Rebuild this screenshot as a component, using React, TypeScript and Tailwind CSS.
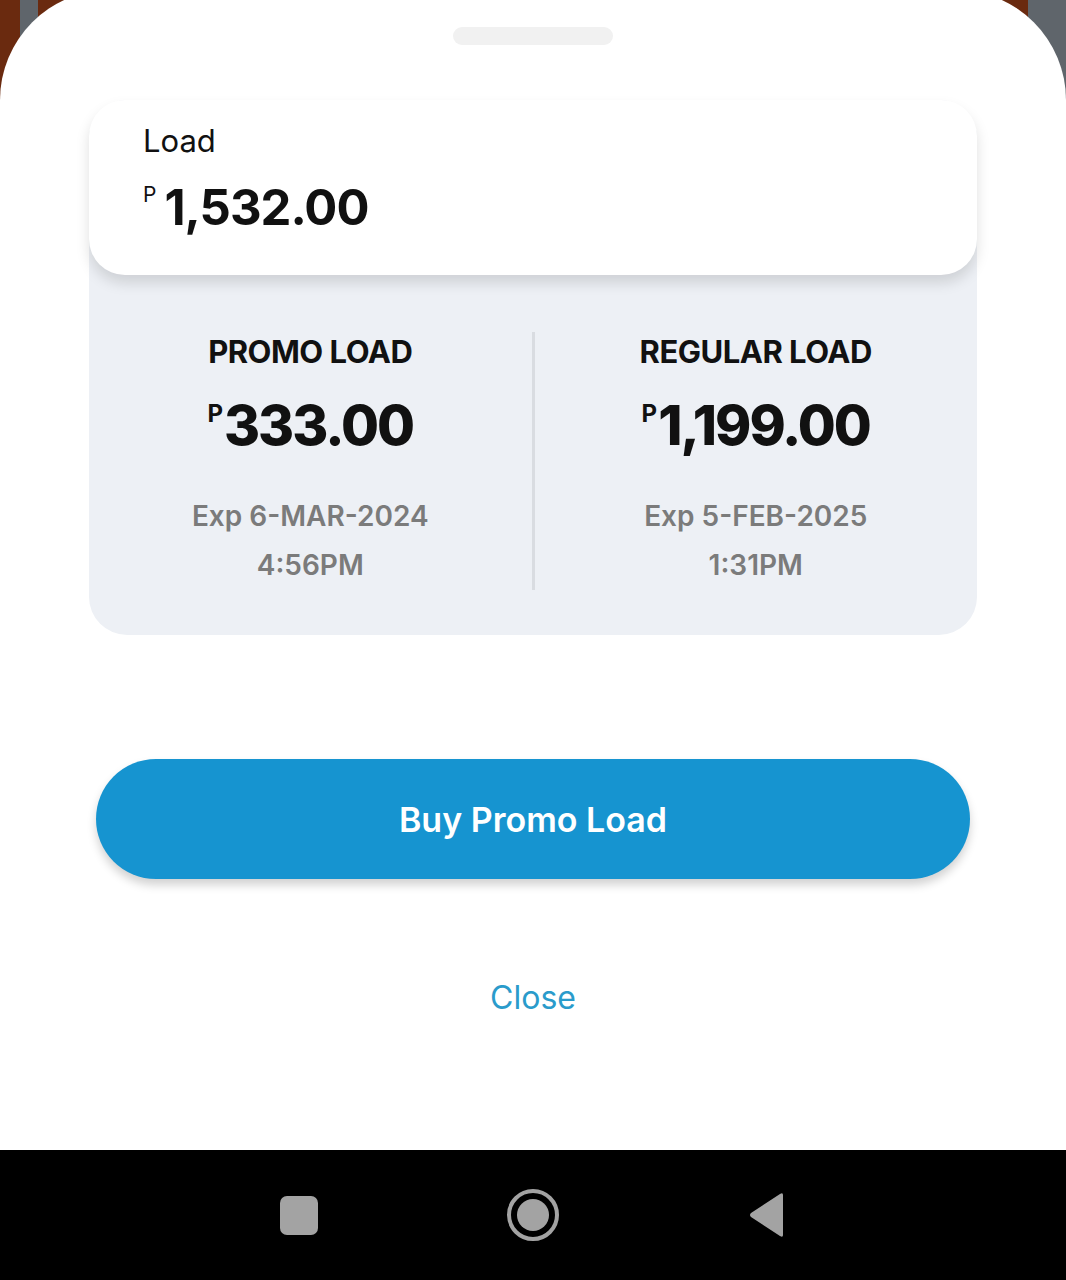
const font = "font-['Inter','Noto_Sans',sans-serif]";

function Column({ title, amount, exp, time }: { title: string; amount: string; exp: string; time: string }) {
  return (
    <div className="flex-1 flex flex-col items-center text-center">
      <div className="text-[31px] leading-[40px] font-bold text-[#111] tracking-[-0.5px]">{title}</div>
      <div className="mt-[26px] flex items-start leading-none">
        <span className="text-[24px] font-bold text-[#111] mt-[4px] mr-[1px]">P</span>
        <span className="text-[55px] font-extrabold text-[#111] tracking-[-2px]">{amount}</span>
      </div>
      <div className="mt-[39px] text-[28px] leading-[49px] font-semibold text-[#7b7b7b]">
        <div>{exp}</div>
        <div>{time}</div>
      </div>
    </div>
  );
}

export default function App() {
  return (
    <div className={`relative w-[1066px] h-[1280px] overflow-hidden bg-[#6a2a0f] ${font}`}>
      {/* background behind the sheet */}
      <div className="absolute left-[20px] top-0 w-[18px] h-[120px] bg-[#5f656b]" />
      <div className="absolute right-0 top-0 w-[38px] h-[140px] bg-[#5f656b]" />

      <div className="relative flex flex-col h-full">
        {/* bottom sheet */}
        <div className="-mt-[10px] h-[1160px] bg-white rounded-t-[110px] flex flex-col items-center">
          <div className="mt-[37px] w-[160px] h-[18px] rounded-full bg-[#f1f1f1]" />

          <div className="mt-[55px] w-[888px] rounded-[38px] bg-[#edf0f5]">
            <div className="h-[175px] rounded-[36px] bg-white shadow-[0_8px_14px_rgba(0,0,0,0.13)] pl-[54px] pt-[20px]">
              <div className="text-[31px] leading-[42px] text-[#111]">Load</div>
              <div className="mt-[21px] flex items-start leading-none">
                <span className="text-[21px] text-[#111] mt-[1px] mr-[8px]">P</span>
                <span className="text-[49px] font-bold text-[#111] tracking-[-1px]">1,532.00</span>
              </div>
            </div>
            <div className="flex pt-[57px] pb-[45px]">
              <Column title="PROMO LOAD" amount="333.00" exp="Exp 6-MAR-2024" time="4:56PM" />
              <div className="w-[3px] bg-[#d9dce1] self-stretch" />
              <Column title="REGULAR LOAD" amount="1,199.00" exp="Exp 5-FEB-2025" time="1:31PM" />
            </div>
          </div>

          <button className="mt-[124px] w-[874px] h-[120px] rounded-full bg-[#1694d0] shadow-[0_6px_10px_rgba(0,0,0,0.18)] text-white text-[34px] font-semibold">
            Buy Promo Load
          </button>

          <button className="mt-[95px] text-[32px] text-[#2a9bcb]">Close</button>
        </div>

        {/* android nav bar */}
        <div className="h-[130px] bg-black flex items-center justify-between px-[280px]">
          <div className="w-[38px] h-[39px] rounded-[7px] bg-[#a3a3a3]" />
          <svg width="54" height="54" viewBox="0 0 54 54">
            <circle cx="27" cy="27" r="24" fill="none" stroke="#a3a3a3" strokeWidth="4" />
            <circle cx="27" cy="27" r="16" fill="#a3a3a3" />
          </svg>
          <svg width="38" height="46" viewBox="0 0 38 46">
            <path d="M35 3 L35 43 Q35 46 32 44 L3 25 Q1 23 3 21 L32 2 Q35 0 35 3 Z" fill="#a3a3a3" />
          </svg>
        </div>
      </div>
    </div>
  );
}
